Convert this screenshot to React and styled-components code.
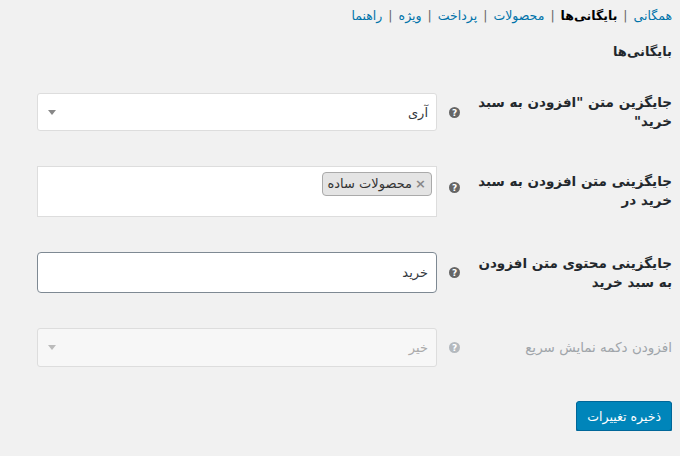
import React from "react";
import styled, { createGlobalStyle } from "styled-components";

const G = createGlobalStyle`
  body{margin:0;background:#f1f1f1;font-family:"DejaVu Sans",Tahoma,sans-serif;color:#23282d;}
`;
const Page = styled.div`direction:rtl;padding:6px 8px 0 8px;`;
const Nav = styled.div`font-size:12.5px;color:#555;line-height:20px;display:flex;gap:6px;`;
const NavLink = styled.a`color:${p=>p.$cur?"#000":"#0073aa"};font-weight:${p=>p.$cur?"bold":"normal"};text-decoration:none;`;
const Sep = styled.span`color:#666;`;
const Title = styled.h2`font-size:13px;font-weight:bold;margin:16px 0 0;line-height:20px;`;
const Form = styled.div`display:flex;flex-direction:column;gap:35px;margin-top:31px;`;
const Row = styled.div`display:grid;grid-template-columns:200px 35px 400px;align-items:${p=>p.$top?"start":"center"};`;
const Label = styled.div`font-size:13.5px;font-weight:bold;line-height:19px;color:${p=>p.$dis?"#a0a5aa":"#23282d"};font-weight:${p=>p.$dis?"normal":"bold"};padding-top:${p=>p.$pt||0}px;`;
const Help = styled.span`width:11px;height:11px;border-radius:50%;background:${p=>p.$dis?"#b4b9be":"#666"};color:#fff;font-size:9px;font-weight:bold;display:flex;align-items:center;justify-content:center;justify-self:center;font-family:"DejaVu Sans",sans-serif;margin-top:${p=>p.$mt||0}px;`;
const Box = styled.div`box-sizing:border-box;height:${p=>p.$h}px;background:${p=>p.$dis?"#f7f7f7":"#fff"};border:1px solid ${p=>p.$dark?"#7e8993":"#ddd"};border-radius:${p=>p.$r||0}px;display:flex;align-items:${p=>p.$top?"flex-start":"center"};justify-content:space-between;padding:${p=>p.$top?"5px 4px":"0 8px"};font-size:13px;color:${p=>p.$dis?"#aaa":"#32373c"};`;
const Arrow = styled.span`width:0;height:0;border-left:4px solid transparent;border-right:4px solid transparent;border-top:5px solid ${p=>p.$dis?"#bbb":"#888"};margin-left:2px;`;
const Tag = styled.span`background:#e4e4e4;border:1px solid #aaa;border-radius:4px;padding:2px 5px;font-size:13px;color:#333;display:flex;gap:3px;align-items:center;line-height:18px;`;
const X = styled.span`color:#888;font-weight:bold;`;
const Footer = styled.div`display:flex;margin-top:34px;`;
const Btn = styled.button`background:#0085ba;border:1px solid #006799;border-radius:3px;color:#fff;font-family:inherit;font-size:12.5px;height:30px;padding:0 10px;box-shadow:0 1px 0 #006799;`;

export default function App(){
  const links=["همگانی","بایگانی‌ها","محصولات","پرداخت","ویژه","راهنما"];
  return <Page><G/>
    <Nav>{links.map((l,i)=><React.Fragment key={i}>{i>0&&<Sep>|</Sep>}<NavLink $cur={i===1}>{l}</NavLink></React.Fragment>)}</Nav>
    <Title>بایگانی‌ها</Title>
    <Form>
      <Row $top><Label>جایگزین متن "افزودن به سبد خرید"</Label><Help $mt={14}>?</Help>
        <Box $h={38} $r={3}><span>آری</span><Arrow/></Box></Row>
      <Row $top><Label $pt={6}>جایگزینی متن افزودن به سبد خرید در</Label><Help $mt={16}>?</Help>
        <Box $h={51} $top><Tag><X>×</X>محصولات ساده</Tag></Box></Row>
      <Row><Label>جایگزینی محتوی متن افزودن به سبد خرید</Label><Help>?</Help>
        <Box $h={41} $r={4} $dark><span>خرید</span></Box></Row>
      <Row><Label $dis>افزودن دکمه نمایش سریع</Label><Help $dis>?</Help>
        <Box $h={39} $r={3} $dis><span>خیر</span><Arrow $dis/></Box></Row>
    </Form>
    <Footer><Btn>ذخیره تغییرات</Btn></Footer>
  </Page>;
}
